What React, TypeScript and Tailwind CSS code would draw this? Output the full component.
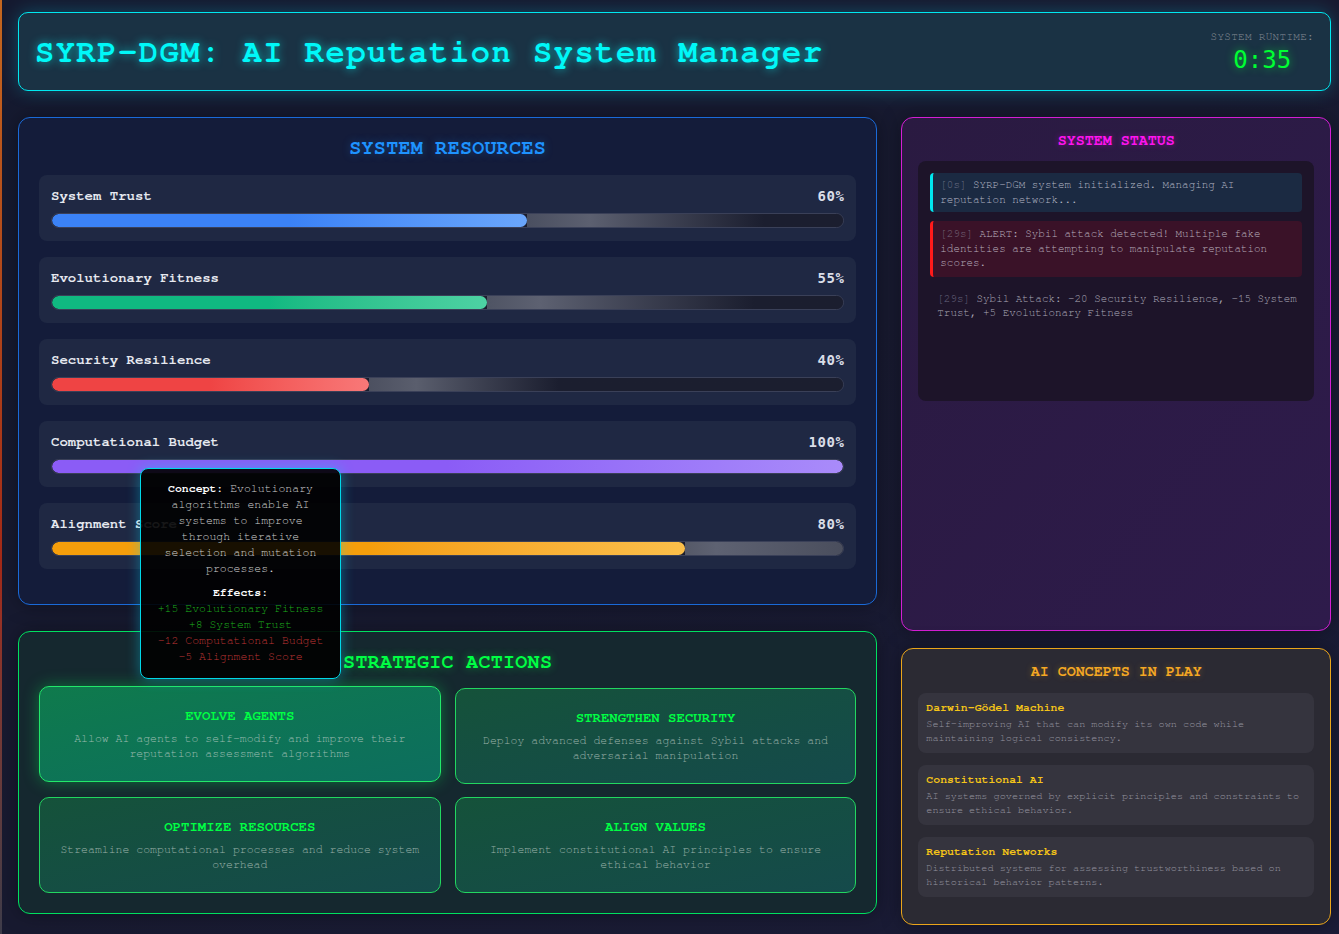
import React from "react";

type Resource = {
  label: string;
  value: number;
  fill: string;
  track: string;
};

const RESOURCES: Resource[] = [
  {
    label: "System Trust",
    value: 60,
    fill: "bg-gradient-to-r from-[#3b82f6] from-50% to-[#6aa6fb]",
    track: "bg-gradient-to-r from-[#4a4f60] via-[#5c6070] via-20% to-[#1b1e2f] to-75%",
  },
  {
    label: "Evolutionary Fitness",
    value: 55,
    fill: "bg-gradient-to-r from-[#10b981] from-50% to-[#4dd2a3]",
    track: "bg-gradient-to-r from-[#4f5464] via-[#5d6171] via-15% to-[#1b1e2f] to-75%",
  },
  {
    label: "Security Resilience",
    value: 40,
    fill: "bg-gradient-to-r from-[#ef4444] from-50% to-[#f87878]",
    track: "bg-gradient-to-r from-[#4c5060] via-[#5a5e6d] via-10% to-[#1b1e2f] to-40%",
  },
  {
    label: "Computational Budget",
    value: 100,
    fill: "bg-gradient-to-r from-[#8b5cf6] from-50% to-[#a98bfa]",
    track: "bg-[#1b1e2f]",
  },
  {
    label: "Alignment Score",
    value: 80,
    fill: "bg-gradient-to-r from-[#f59e0b] from-50% to-[#fbbf4a]",
    track: "bg-gradient-to-r from-[#555968] via-[#5e6272] via-20% to-[#4a4e5d]",
  },
];

const ACTIONS = [
  {
    title: "EVOLVE AGENTS",
    desc: "Allow AI agents to self-modify and improve their reputation assessment algorithms",
    hover: true,
  },
  {
    title: "STRENGTHEN SECURITY",
    desc: "Deploy advanced defenses against Sybil attacks and adversarial manipulation",
    hover: false,
  },
  {
    title: "OPTIMIZE RESOURCES",
    desc: "Streamline computational processes and reduce system overhead",
    hover: false,
  },
  {
    title: "ALIGN VALUES",
    desc: "Implement constitutional AI principles to ensure ethical behavior",
    hover: false,
  },
];

const CONCEPTS = [
  {
    name: "Darwin-Gödel Machine",
    desc: "Self-improving AI that can modify its own code while maintaining logical consistency.",
  },
  {
    name: "Constitutional AI",
    desc: "AI systems governed by explicit principles and constraints to ensure ethical behavior.",
  },
  {
    name: "Reputation Networks",
    desc: "Distributed systems for assessing trustworthiness based on historical behavior patterns.",
  },
];

const MONO = "font-['Nimbus_Mono_PS','Nimbus_Mono_L','FreeMono','Courier_New','Liberation_Mono',monospace]";
const SANS_MONO = "font-['DejaVu_Sans_Mono',monospace]";

function ResourceBar({ r }: { r: Resource }) {
  return (
    <div className="rounded-lg bg-[#1f2843] px-3 pb-[13px] pt-3">
      <div className="mb-2 flex items-center justify-between leading-[18px]">
        <span className="text-[14px] font-bold text-[#e6e9f0]">{r.label}</span>
        <span className={`${SANS_MONO} text-[14px] font-bold tracking-[0.5px] text-[#d9dde7]`}>
          {r.value}%
        </span>
      </div>
      <div className="flex h-[15px] overflow-hidden rounded-full border border-[#3a4058] bg-[#1b1e2f]">
        <div className={`h-full rounded-full ${r.fill}`} style={{ width: `${r.value}%` }} />
        {r.value < 100 && <div className={`h-full flex-1 ${r.track}`} />}
      </div>
    </div>
  );
}

export default function App() {
  return (
    <div className={`${MONO} flex min-h-screen bg-gradient-to-br from-[#151a30] via-[#181a30] to-[#1b1c38] text-white`}>
      <div className="w-[2px] shrink-0 bg-gradient-to-b from-[#c4661f] via-[#a52a18] via-60% to-[#3c3c4a]" />
      <div className="flex-1 pb-3 pl-4 pr-2 pt-3">
        {/* Header */}
        <header className="flex h-[79px] items-center justify-between rounded-[10px] border border-[#00e8f0] bg-[#1a3244] px-4 shadow-[0_0_18px_rgba(0,230,255,0.25)]">
          <h1 className="mt-px text-[32px] font-bold tracking-[1.55px] text-[#00f8f8] [text-shadow:0_0_10px_rgba(0,255,255,0.65)]">
            SYRP-DGM: AI Reputation System Manager
          </h1>
          <div className="text-center">
            <div className="text-[11px] leading-[13px] tracking-[0.3px] text-[#858c95]">SYSTEM RUNTIME:</div>
            <div className={`${SANS_MONO} mt-[3px] text-[24px] leading-[28px] text-[#00ff33] [text-shadow:0_0_8px_rgba(0,255,60,0.6)]`}>
              0:35
            </div>
          </div>
        </header>

        <main className="mt-[26px] grid grid-cols-[2fr_1fr] items-start gap-6">
          {/* Left column */}
          <div className="relative flex flex-col gap-[26px]">
            <section className="rounded-[12px] border border-[#1a6ad8] bg-[#141c3a] px-5 pb-[35px] pt-4 shadow-[0_0_20px_rgba(0,0,0,0.35)]">
              <h2 className="mb-[13px] text-center text-[20px] font-bold leading-[28px] tracking-[0.3px] text-[#1e93ff] [text-shadow:0_0_8px_rgba(30,147,255,0.35)]">
                SYSTEM RESOURCES
              </h2>
              <div className="flex flex-col gap-4">
                {RESOURCES.map((r) => (
                  <ResourceBar key={r.label} r={r} />
                ))}
              </div>
            </section>

            <section className="rounded-[12px] border border-[#00e060] bg-[#15282f] px-5 pb-5 pt-4 shadow-[0_0_20px_rgba(0,0,0,0.35)]">
              <h2 className="mb-3 text-center text-[20px] font-bold leading-[28px] tracking-[0.3px] text-[#00ff44] [text-shadow:0_0_8px_rgba(0,255,70,0.45)]">
                STRATEGIC ACTIONS
              </h2>
              <div className="grid grid-cols-2 gap-x-3.5 gap-y-[13px]">
                {ACTIONS.map((a) =>
                  a.hover ? (
                    <button
                      key={a.title}
                      className="-translate-y-0.5 rounded-[10px] border border-[#22e86a] bg-gradient-to-br from-[#0f7a4c] to-[#0d6e5e] p-5 text-center shadow-[0_0_16px_rgba(0,255,90,0.35)]"
                    >
                      <div className="mb-1.5 text-[14px] font-bold leading-[18px] text-[#00ff44]">{a.title}</div>
                      <div className="text-[11.5px] leading-[15px] text-[#9cbcb0]">{a.desc}</div>
                    </button>
                  ) : (
                    <button
                      key={a.title}
                      className="rounded-[10px] border border-[#22d760] bg-gradient-to-br from-[#15523a] to-[#154a4b] p-5 text-center"
                    >
                      <div className="mb-1.5 text-[14px] font-bold leading-[18px] text-[#00ff44]">{a.title}</div>
                      <div className="text-[11.5px] leading-[15px] text-[#9bb1a9]">{a.desc}</div>
                    </button>
                  )
                )}
              </div>
            </section>

            {/* Tooltip over Evolve Agents */}
            <div className="absolute left-[122px] top-[351px] w-[201px] rounded-lg border border-[#00d8e8] bg-black/90 px-3 pb-[13px] pt-3 text-center text-[11.5px] leading-4 shadow-[0_0_14px_rgba(0,220,255,0.4)]">
              <p className="text-[#d0d0d0]">
                <strong className="text-white">Concept:</strong> Evolutionary algorithms enable AI systems to improve
                through iterative selection and mutation processes.
              </p>
              <p className="mt-2 font-bold text-white">Effects:</p>
              <p className="text-[#1db01d]">+15 Evolutionary Fitness</p>
              <p className="text-[#1db01d]">+8 System Trust</p>
              <p className="text-[#bf3434]">-12 Computational Budget</p>
              <p className="text-[#bf3434]">-5 Alignment Score</p>
            </div>
          </div>

          {/* Right column */}
          <div className="flex flex-col gap-[17px]">
            <section className="h-[514px] rounded-[12px] border border-[#d41ed4] bg-gradient-to-br from-[#2a1a41] to-[#2e1b4b] px-4 pt-[13px] shadow-[0_0_20px_rgba(0,0,0,0.35)]">
              <h2 className="mb-[10px] text-center text-[15px] font-bold leading-5 text-[#ff14ef] [text-shadow:0_0_6px_rgba(255,0,240,0.4)]">
                SYSTEM STATUS
              </h2>
              <div className="flex h-[240px] flex-col gap-[9px] rounded-lg bg-[#1d1429] p-3 text-[10.9px] leading-[14.5px]">
                <div className="rounded-[4px] border-l-[3px] border-[#00e8f0] bg-[#1b2a42] py-[5px] pl-[7px] pr-2 text-[#b4b6c4]">
                  <span className="text-[#6d7086]">[0s]</span> SYRP-DGM system initialized. Managing AI reputation
                  network...
                </div>
                <div className="rounded-[4px] border-l-[3px] border-[#ff1a1a] bg-[#3a1228] py-[6px] pl-[7px] pr-2 text-[#b8aebc]">
                  <span className="text-[#766678]">[29s]</span> ALERT: Sybil attack detected! Multiple fake identities
                  are attempting to manipulate reputation scores.
                </div>
                <div className="py-[6px] pl-[7px] text-[#aba9b8]">
                  <span className="text-[#68667f]">[29s]</span> Sybil Attack: -20 Security Resilience, -15 System
                  Trust, +5 Evolutionary Fitness
                </div>
              </div>
            </section>

            <section className="h-[277px] rounded-[12px] border border-[#eaa51a] bg-[#2b2a33] px-4 pt-[13px] shadow-[0_0_20px_rgba(0,0,0,0.35)]">
              <h2 className="mb-[11px] text-center text-[15px] font-bold leading-5 text-[#f5a823] [text-shadow:0_0_6px_rgba(245,168,35,0.35)]">
                AI CONCEPTS IN PLAY
              </h2>
              <div className="flex flex-col gap-3">
                {CONCEPTS.map((c) => (
                  <div key={c.name} className="rounded-lg bg-[#35343e] px-2 pb-2 pt-[7px]">
                    <div className="mb-[2px] text-[11.5px] font-bold leading-[15px] text-[#f5c518]">{c.name}</div>
                    <div className="text-[10.2px] leading-[14px] text-[#94939e]">{c.desc}</div>
                  </div>
                ))}
              </div>
            </section>
          </div>
        </main>
      </div>
    </div>
  );
}
